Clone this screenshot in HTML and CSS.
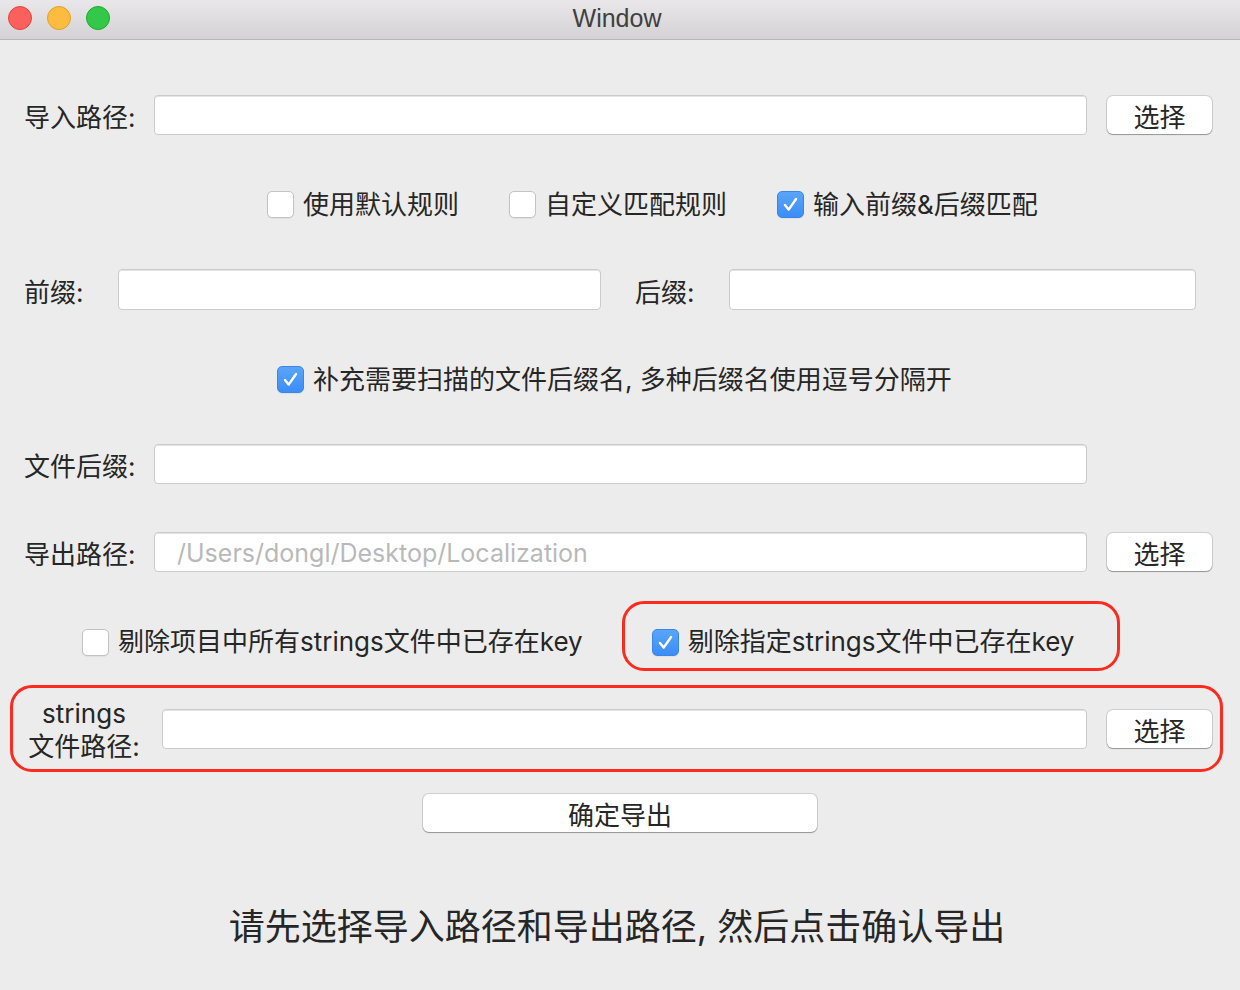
FILE: index.html
```html
<!DOCTYPE html>
<html lang="zh-CN">
<head>
<meta charset="utf-8">
<title>Window</title>
<link rel="stylesheet" href="styles.css">
</head>
<body>
<div class="window">
  <div class="titlebar">
    <div class="lights">
      <span class="light red"></span>
      <span class="light yellow"></span>
      <span class="light green"></span>
    </div>
    <div class="title">Window</div>
  </div>

  <div class="content">
    <div class="row row-import">
      <label class="label">导入路径:</label>
      <div class="input"></div>
      <button class="btn">选择</button>
    </div>

    <div class="row checks checks-1">
      <span class="check-item"><span class="box"></span><span class="ctext">使用默认规则</span></span>
      <span class="check-item"><span class="box"></span><span class="ctext">自定义匹配规则</span></span>
      <span class="check-item"><span class="box checked"><svg viewBox="0 0 27 27"><polyline points="7.5,14 11.5,19 19.5,7.5"/></svg></span><span class="ctext">输入前缀&amp;后缀匹配</span></span>
    </div>

    <div class="row row-fix">
      <label class="label label-short">前缀:</label>
      <div class="input input-prefix"></div>
      <label class="label label-short label-suffix">后缀:</label>
      <div class="input input-suffix"></div>
    </div>

    <div class="row checks checks-2">
      <span class="check-item"><span class="box checked"><svg viewBox="0 0 27 27"><polyline points="7.5,14 11.5,19 19.5,7.5"/></svg></span><span class="ctext">补充需要扫描的文件后缀名, 多种后缀名使用逗号分隔开</span></span>
    </div>

    <div class="row row-ext">
      <label class="label">文件后缀:</label>
      <div class="input"></div>
    </div>

    <div class="row row-export">
      <label class="label">导出路径:</label>
      <div class="input"><span class="placeholder">/Users/dongl/Desktop/Localization</span></div>
      <button class="btn">选择</button>
    </div>

    <div class="row row-remove">
      <span class="check-item remove-all"><span class="box"></span><span class="ctext">剔除项目中所有strings文件中已存在key</span></span>
      <div class="highlight hl-check">
        <span class="check-item"><span class="box checked"><svg viewBox="0 0 27 27"><polyline points="7.5,14 11.5,19 19.5,7.5"/></svg></span><span class="ctext">剔除指定strings文件中已存在key</span></span>
      </div>
    </div>

    <div class="highlight hl-strings">
      <label class="label label-two">strings<br>文件路径:</label>
      <div class="input input-strings"></div>
      <button class="btn">选择</button>
    </div>

    <div class="row row-confirm">
      <button class="btn btn-wide">确定导出</button>
    </div>

    <p class="hint">请先选择导入路径和导出路径, 然后点击确认导出</p>
  </div>
</div>
</body>
</html>
```

FILE: styles.css
```css
* { box-sizing: border-box; }

html, body {
  margin: 0;
  padding: 0;
  background: #ececec;
}

body {
  width: 1240px;
  height: 990px;
  overflow: hidden;
  font-family: "Inter", "Noto Sans CJK SC", sans-serif;
  color: #262626;
}

.titlebar {
  height: 40px;
  background: linear-gradient(#e9e7e9, #d4d2d4);
  border-bottom: 1px solid #b8b6b8;
  display: flex;
  align-items: center;
  justify-content: center;
  position: relative;
}

.lights {
  position: absolute;
  left: 8px;
  top: 6px;
  display: flex;
  gap: 15px;
}

.light {
  width: 24px;
  height: 24px;
  border-radius: 50%;
  display: block;
}
.light.red { background: #fc605c; border: 1px solid #e0443e; }
.light.yellow { background: #fdbc40; border: 1px solid #dea123; }
.light.green { background: #34c84a; border: 1px solid #1aab29; }

.title {
  font-family: "Liberation Sans", sans-serif;
  font-size: 25px;
  color: #404040;
  margin-left: -6px;
  margin-top: -2px;
}

.content {
  padding-left: 24px;
}

.row {
  display: flex;
  align-items: center;
}

.label {
  flex: 0 0 130px;
  font-size: 26px;
  line-height: 34px;
  padding-top: 6px;
}

.label-short { flex-basis: 94px; }
.label-suffix { margin-left: 34px; }

.input {
  height: 40px;
  width: 933px;
  background: #fff;
  border: 1px solid #cbcbcb;
  border-radius: 4px;
  box-shadow: inset 0 1px 0 #e4e4e4;
  display: flex;
  align-items: center;
  padding-left: 22px;
}

.placeholder {
  font-size: 25px;
  color: #b9b9b9;
  padding-top: 2px;
}

.btn {
  margin: 0 0 0 20px;
  width: 105px;
  height: 38px;
  background: #fff;
  border: none;
  border-radius: 6px;
  box-shadow: 0 0 0 1px rgba(0,0,0,0.12), 0 1px 1px rgba(0,0,0,0.28);
  font-family: inherit;
  font-size: 26px;
  color: #262626;
  padding: 5px 0 0 0;
  line-height: 33px;
}

.row-import { margin-top: 55px; height: 40px; }

.checks { height: 27px; }
.checks-1 { margin-top: 56px; padding-left: 243px; gap: 50px; }
.checks-2 { margin-top: 56px; padding-left: 253px; }

.check-item {
  display: flex;
  align-items: center;
  gap: 9px;
}

.box {
  width: 27px;
  height: 27px;
  flex: 0 0 27px;
  border-radius: 5px;
  background: #fff;
  border: 1px solid #c3c3c3;
  box-shadow: 0 1px 1px rgba(0,0,0,0.05);
  display: flex;
}
.box.checked {
  background: linear-gradient(#5aa5fa, #3b8df5);
  border-color: #3a86e8;
}
.box svg { width: 100%; height: 100%; }
.box polyline {
  fill: none;
  stroke: #fff;
  stroke-width: 2.6;
  stroke-linecap: round;
  stroke-linejoin: round;
}

.ctext {
  font-size: 26px;
  line-height: 30px;
}

.row-fix { margin-top: 51px; height: 41px; }
.row-fix .input { height: 41px; }
.input-prefix { width: 483px; }
.input-suffix { width: 467px; }

.row-ext { margin-top: 51px; height: 40px; }
.row-export { margin-top: 48px; height: 40px; }

.row-remove {
  margin-top: 29px;
  height: 70px;
  align-items: flex-start;
}

.remove-all {
  margin-left: 58px;
  margin-top: 26px;
}

.highlight {
  border: 3px solid #fb2b1f;
  border-radius: 22px;
}

.hl-check {
  margin-left: 39px;
  width: 498px;
  height: 70px;
  padding: 23px 0 0 27px;
}

.hl-strings {
  margin: 14px 0 0 -14px;
  width: 1213px;
  height: 87px;
  display: flex;
  align-items: center;
}

.label-two {
  flex: 0 0 140px;
  text-align: center;
  line-height: 33px;
  margin-left: 1px;
  padding-top: 3px;
}

.input-strings {
  width: 925px;
  margin-left: 8px;
}

.row-confirm {
  margin-top: 22px;
  height: 38px;
  justify-content: center;
  padding-right: 24px;
}

.btn-wide {
  width: 394px;
  margin-left: 0;
}

.hint {
  margin: 74px 0 0 0;
  font-size: 36px;
  line-height: 43px;
  text-align: center;
  padding-right: 30px;
}
```
